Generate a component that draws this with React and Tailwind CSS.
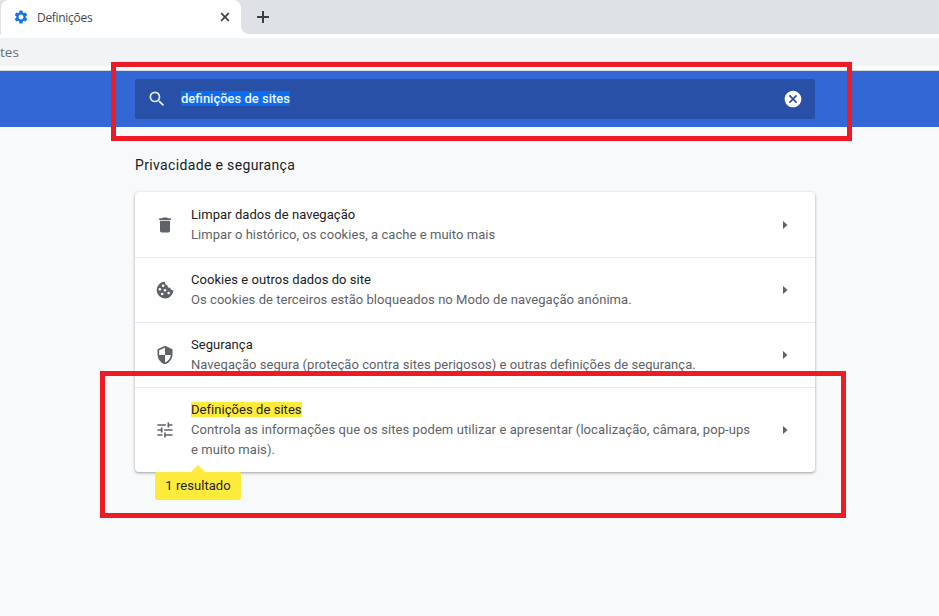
import React from "react";
import { MdDelete, MdSecurity, MdTune, MdSearch, MdCancel, MdSettings } from "react-icons/md";

function CookieIcon({ className }) {
  return (
    <svg className={className} viewBox="0 0 20 20">
      <path
        fill="currentColor"
        d="M10 1.7a8.4 8.4 0 1 0 8.4 8.3c-.9.3-1.9.1-2.5-.6-.5-.5-.6-1.1-.5-1.7-1.7.5-3.2-.8-2.9-2.5C10.900 5.300 9.700 3.600 10 1.700z"
      />
      <g fill="#fff">
        <circle cx="8.100" cy="5.800" r="1.250" />
        <circle cx="4.900" cy="9.300" r="1.250" />
        <circle cx="10" cy="10.300" r="1.250" />
        <circle cx="7.200" cy="14" r="1.250" />
        <circle cx="13.600" cy="13" r="1.250" />
      </g>
    </svg>
  );
}

function TabStrip() {
  return (
    <div className="flex h-[34px] bg-[#dee1e6] pl-px">
      <div className="relative flex h-[34px] w-[240px] items-center rounded-t-lg bg-white pl-3 pr-[9px]">
        <MdSettings className="size-4 text-[#1a73e8]" />
        <span className="ml-2 mt-px font-['Open_Sans','Noto_Sans',sans-serif] text-[12px] leading-4 tracking-[-0.3px] text-[#45494d]">Definições</span>
        <svg className="ml-auto size-[14px]" viewBox="0 0 14 14" fill="none" stroke="#3c4043" strokeWidth="1.7">
          <path d="M3.2 3.2l7.6 7.6M10.8 3.2l-7.6 7.6" />
        </svg>
        <svg className="absolute -right-2 bottom-0 size-2" viewBox="0 0 8 8" fill="#fff">
          <path d="M0 0a8 8 0 0 0 8 8H0z" />
        </svg>
      </div>
      <svg className="ml-[15px] mt-[10px] size-[14px]" viewBox="0 0 14 14" fill="none" stroke="#3c4043" strokeWidth="2">
        <path d="M7 1v12M1 7h12" />
      </svg>
    </div>
  );
}

function Row({ icon: Icon, title, lines, marked, first }) {
  return (
    <div className={`flex items-center px-5 ${first ? "" : "border-t border-[#e8eaed]"} ${marked ? "h-[85px]" : "h-[65px]"}`}>
      <Icon className="size-5 shrink-0 text-[#5f6368]" />
      <div className="ml-4 grow whitespace-nowrap text-[13px] leading-5">
        <div className="tracking-[0.05px] text-[#202124]">
          {marked ? <mark className="bg-[#ffeb3b] text-[#202124]">{title}</mark> : title}
        </div>
        {lines.map((l) => (
          <div key={l} className={`text-[#5f6368] ${marked ? "tracking-[0.08px]" : "tracking-[0.05px]"}`}>{l}</div>
        ))}
      </div>
      <svg className="mr-[5px] h-2 w-[10px] shrink-0" viewBox="0 0 10 8" fill="#5f6368">
        <path d="M3 0l4.500 4L3 8z" />
      </svg>
    </div>
  );
}

export default function App() {
  return (
    <div className="relative h-[616px] w-[939px] overflow-hidden bg-[#f8f9fa] font-[Roboto,sans-serif]">
      <TabStrip />
      <div className="h-9 bg-white pt-1">
        <div className="h-7 bg-[#f1f3f4] font-['Open_Sans','Noto_Sans',sans-serif] text-[13.5px] leading-[29px] text-[#6b6f73]">tes</div>
      </div>
      <div className="h-[57px] border-t border-[#d5d9df] bg-[#3367d6] pl-[135px] pt-2">
        <div className="flex h-10 w-[680px] items-center rounded-[2px] bg-[#2850a7] px-3">
          <MdSearch className="size-5 text-[#e6ebf6]" />
          <span className="mb-0.5 ml-[14px] bg-[#0b6cf0] text-[13px] font-medium leading-[15px] text-[#f1f5fd]">definições de sites</span>
          <MdCancel className="ml-auto size-5 text-white" />
        </div>
      </div>
      <main className="pl-[135px] pt-[27px]">
        <h2 className="h-[38px] text-[14px] leading-[22px] tracking-[0.35px] text-[#202124]">Privacidade e segurança</h2>
        <section className="w-[680px] rounded bg-white shadow-[0_1px_2px_0_rgba(60,64,67,0.3),0_1px_3px_1px_rgba(60,64,67,0.15)]">
          <Row first icon={MdDelete} title="Limpar dados de navegação" lines={["Limpar o histórico, os cookies, a cache e muito mais"]} />
          <Row icon={CookieIcon} title="Cookies e outros dados do site" lines={["Os cookies de terceiros estão bloqueados no Modo de navegação anónima."]} />
          <Row icon={MdSecurity} title="Segurança" lines={["Navegação segura (proteção contra sites perigosos) e outras definições de segurança."]} />
          <Row marked icon={MdTune} title="Definições de sites" lines={["Controla as informações que os sites podem utilizar e apresentar (localização, câmara, pop-ups", "e muito mais)."]} />
        </section>
      </main>
      <div className="absolute left-[155px] top-[472px] h-7 w-[86px] rounded-[2px] bg-[#ffeb3b] text-center text-[13px] leading-[27px] tracking-[0.05px] text-[#202124]">
        <svg className="absolute -top-[7px] left-[36px] h-[7px] w-[14px]" viewBox="0 0 14 7" fill="#ffeb3b">
          <path d="M0 7l7-7 7 7z" />
        </svg>
        1 resultado
      </div>
      <div className="absolute left-[111px] top-[62px] h-[79px] w-[741px] border-[5px] border-[#ed1c24]" />
      <div className="absolute left-[100px] top-[371px] h-[147px] w-[746px] border-[5px] border-[#ed1c24]" />
    </div>
  );
}
